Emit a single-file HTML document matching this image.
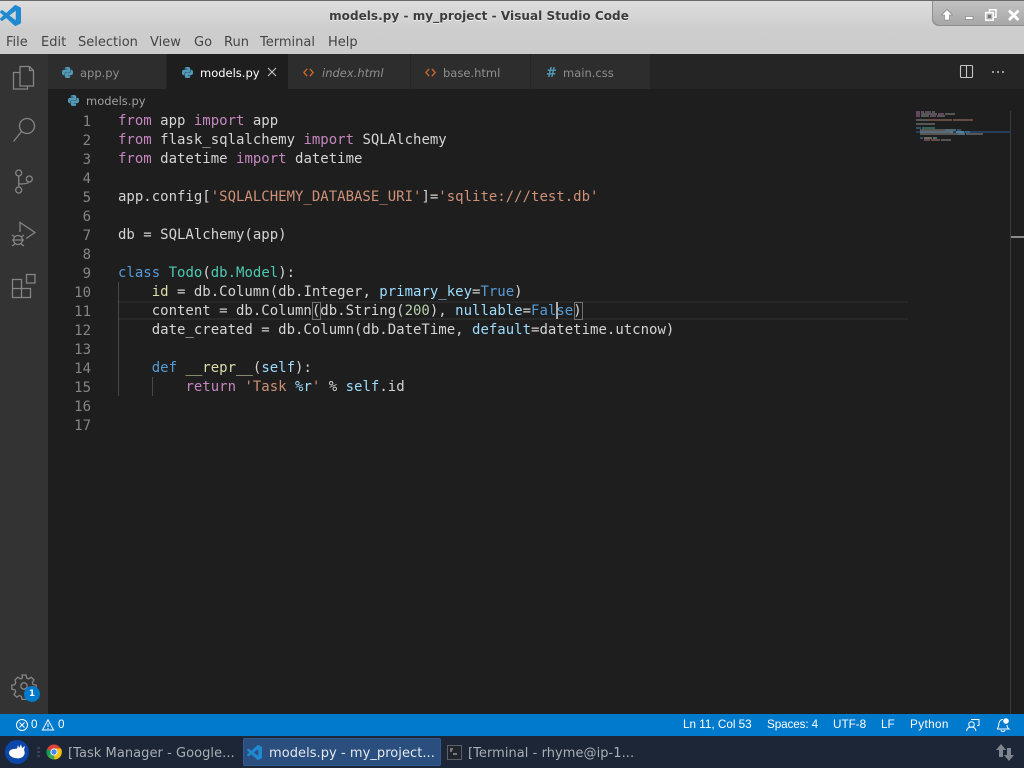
<!DOCTYPE html>
<html><head><meta charset="utf-8"><style>
html,body{margin:0;padding:0;width:1024px;height:768px;overflow:hidden;background:#1e1e1e}
.a{position:absolute;white-space:pre}
#code div{position:absolute;left:118px;height:19px;line-height:19px;white-space:pre;font:14px/19px "DejaVu Sans Mono","Liberation Mono",monospace;color:#d4d4d4}
.n{position:absolute;width:43px;left:48px;text-align:right;font:14px/19px "DejaVu Sans Mono","Liberation Mono",monospace;color:#858585}
.k{color:#c586c0}.b{color:#569cd6}.s{color:#ce9178}.t{color:#4ec9b0}.v{color:#9cdcfe}.f{color:#dcdcaa}.d{color:#b5cea8}
.m{position:absolute;top:35px;font:13px/16px "DejaVu Sans",sans-serif;color:#444}
.tab{position:absolute;top:54px;height:35px;background:#2d2d2d;border-right:1px solid #252526;box-sizing:border-box}
.tl{position:absolute;top:65px;font:11.5px/17px "DejaVu Sans",sans-serif;color:#8f8f8f;white-space:pre}
.st{position:absolute;top:717px;font:11.7px/16px "Liberation Sans",sans-serif;color:#fff;white-space:pre}
.tb{position:absolute;top:745px;font:13px/17px "DejaVu Sans",sans-serif;letter-spacing:.05px;color:#a9aeb5;white-space:pre}
svg{position:absolute;overflow:visible}
</style></head><body>
<svg width="0" height="0" style="position:absolute"><defs>
<symbol id="py" viewBox="0 0 24 24"><path fill="#519aba" d="M14.25.18l.9.2.73.26.59.3.45.32.34.34.25.34.16.33.1.3.04.26.02.2-.01.13V8.5l-.05.63-.13.55-.21.46-.26.38-.3.31-.33.25-.35.19-.35.14-.33.1-.3.07-.26.04-.21.02H8.77l-.69.05-.59.14-.5.22-.41.27-.33.32-.27.35-.2.36-.15.37-.1.35-.07.32-.04.27-.02.21v3.06H3.17l-.21-.03-.28-.07-.32-.12-.35-.18-.36-.26-.36-.36-.35-.46-.32-.59-.28-.73-.21-.88-.14-1.05-.05-1.23.06-1.22.16-1.04.24-.87.32-.71.36-.57.4-.44.42-.33.42-.24.4-.16.36-.1.32-.05.24-.01h.16l.06.01h8.16v-.83H6.18l-.01-2.75-.02-.37.05-.34.11-.31.17-.28.25-.26.31-.23.38-.2.44-.18.51-.15.58-.12.64-.1.71-.06.77-.04.84-.02 1.27.05zm-6.3 1.98l-.23.33-.08.41.08.41.23.34.33.22.41.09.41-.09.33-.22.23-.34.08-.41-.08-.41-.23-.33-.33-.22-.41-.09-.41.09zm13.09 3.95l.28.06.32.12.35.18.36.27.36.35.35.47.32.59.28.73.21.88.14 1.04.05 1.23-.06 1.23-.16 1.04-.24.86-.32.71-.36.57-.4.45-.42.33-.42.24-.4.16-.36.09-.32.05-.24.02-.16-.01h-8.22v.82h5.84l.01 2.76.02.36-.05.34-.11.31-.17.29-.25.25-.31.24-.38.2-.44.17-.51.15-.58.13-.64.09-.71.07-.77.04-.84.01-1.27-.04-1.07-.14-.9-.2-.73-.25-.59-.3-.45-.33-.34-.34-.25-.34-.16-.33-.1-.3-.04-.25-.02-.2.01-.13v-5.34l.05-.64.13-.54.21-.46.26-.38.3-.32.33-.24.35-.2.35-.14.33-.1.3-.06.26-.04.21-.02.13-.01h5.84l.69-.05.59-.14.5-.21.41-.28.33-.32.27-.35.2-.36.15-.36.1-.35.07-.32.04-.28.02-.21V6.07h2.09l.14.01z"/></symbol>
<symbol id="vs" viewBox="0 0 24 24"><path d="M23.15 2.587L18.21.21a1.494 1.494 0 0 0-1.705.29l-9.46 8.63-4.12-3.128a.999.999 0 0 0-1.276.057L.327 7.261A1 1 0 0 0 .326 8.74L3.899 12 .326 15.26a1 1 0 0 0 .001 1.479L1.65 17.94a.999.999 0 0 0 1.276.057l4.12-3.128 9.46 8.63a1.492 1.492 0 0 0 1.704.29l4.942-2.377A1.5 1.5 0 0 0 24 20.06V3.939a1.5 1.5 0 0 0-.85-1.352zm-5.146 14.861L10.826 12l7.178-5.448v10.896z"/></symbol>
<symbol id="ht" viewBox="0 0 12 12"><path d="M4.5 2 1 6l3.5 4M7.5 2 11 6l-3.5 4" fill="none" stroke="#c8682a" stroke-width="1.5"/></symbol>
</defs></svg>

<!-- title + menu -->
<div class="a" style="left:0;top:0;width:1024px;height:54px;background:linear-gradient(#dedede 0,#d6d6d6 14px,#cdcdcd 30px,#cccccc 100%)"></div>
<div class="a" style="left:0;top:0;width:1024px;height:1px;background:#6a6a6a"></div>
<svg style="left:0;top:5px" width="21" height="21"><use href="#vs" width="21" height="21" fill="#1f8ad2"/></svg>
<div class="a" style="left:319px;top:8px;width:320px;text-align:center;font:bold 12px/16px 'DejaVu Sans',sans-serif;color:#3c3c3c;text-shadow:0 1px 0 #eee;letter-spacing:.05px">models.py - my_project - Visual Studio Code</div>
<div class="m" style="left:6px">File</div><div class="m" style="left:41px">Edit</div><div class="m" style="left:78px">Selection</div><div class="m" style="left:150px">View</div><div class="m" style="left:194px">Go</div><div class="m" style="left:224px">Run</div><div class="m" style="left:260px">Terminal</div><div class="m" style="left:328px">Help</div>

<!-- window controls -->
<div class="a" style="left:932px;top:1px;width:92px;height:25px;background:linear-gradient(#c2c2c2,#a6a6a6);border-bottom-left-radius:7px;box-shadow:inset 1px -1px 0 #8e8e8e"></div>
<svg style="left:932px;top:1px" width="92" height="25">
<path d="M15 8.500 20.500 14H17.500v5h-5v-5H9.500z" fill="#fff" stroke="#777" stroke-width=".6"/>
<rect x="33.500" y="15.500" width="7.500" height="3" fill="#fff" stroke="#777" stroke-width=".6"/>
<path d="M57.500 11V8.700h6.500v7.500h-2.500" fill="none" stroke="#fff" stroke-width="1.500"/>
<rect x="53.700" y="11.700" width="7.500" height="7.500" fill="none" stroke="#fff" stroke-width="1.500"/>
<rect x="56" y="14" width="3" height="3" fill="#777"/>
<path d="M77 9.500l9.500 9.500M86.500 9.500 77 19" stroke="#fff" stroke-width="2.800" fill="none"/>
</svg>

<!-- activity bar -->
<div class="a" style="left:0;top:54px;width:48px;height:660px;background:#333"></div>
<svg style="left:0;top:54px" width="48" height="660" fill="none" stroke="#858585" stroke-width="1.300">
<path d="M20 12.500h9.500l4 4v15.500H20z M29.500 12.500v4h4"/>
<path d="M20 18.500h-6.500v16.500h14v-3"/>
<circle cx="27" cy="72" r="7.500"/><path d="M21.500 77.500 13.500 87.500"/>
<circle cx="18.700" cy="119" r="3"/><circle cx="29.300" cy="125" r="3"/><circle cx="18.700" cy="136" r="3"/>
<path d="M18.700 122v11M19 130c6 0 9-.5 10.300-2"/>
<path d="M20 178V168.500l15 10-9 6"/>
<circle cx="18" cy="186" r="4.500"/><path d="M12 181l3 2M24 181l-3 2M12 186h2M22 186h2M12 192l3-2M24 192l-3-2M13.500 186h9"/>
<path d="M12.500 225.500h9v9h-9zM12.500 234.500h9v9h-9zM21.500 234.500h9v9h-9zM26.500 220.500h8.500v8.500h-8.500z"/>
</svg>
<svg style="left:12px;top:674px" width="24" height="24" viewBox="0 0 24 24" fill="none" stroke="#858585" stroke-width="1.300">
<path d="M10 1h4l.6 3 2 .9 2.600-1.700 2.800 2.800-1.700 2.600.9 2 3 .6v4l-3 .6-.9 2 1.700 2.600-2.800 2.800-2.600-1.700-2 .9-.6 3h-4l-.6-3-2-.9-2.600 1.700-2.800-2.800 1.700-2.600-.9-2-3-.6v-4l3-.6.9-2L3 6l2.800-2.800 2.600 1.700 2-.9z"/>
<circle cx="12" cy="12" r="3.200"/></svg>
<div class="a" style="left:24px;top:686px;width:16px;height:16px;border-radius:50%;background:#007acc;color:#fff;font:bold 9px/16px 'DejaVu Sans',sans-serif;text-align:center">1</div>

<!-- tabs -->
<div class="a" style="left:48px;top:54px;width:976px;height:35px;background:#252526"></div>
<div class="tab" style="left:48px;width:119px"></div>
<div class="tab" style="left:167px;width:121px;background:#1e1e1e;border:0"></div>
<div class="tab" style="left:288px;width:123px"></div>
<div class="tab" style="left:411px;width:120px"></div>
<div class="tab" style="left:531px;width:119px;border:0"></div>
<svg style="left:62px;top:67px" width="11" height="11"><use href="#py" width="11" height="11"/></svg>
<div class="tl" style="left:80px">app.py</div>
<svg style="left:182px;top:67px" width="11" height="11"><use href="#py" width="11" height="11"/></svg>
<div class="tl" style="left:200px;color:#fff">models.py</div>
<svg style="left:267px;top:67px" width="10" height="10"><path d="M1 1l8 8M9 1l-8 8" stroke="#c8c8c8" stroke-width="1.100" fill="none"/></svg>
<svg style="left:303px;top:67px" width="11" height="11"><use href="#ht" width="11" height="11"/></svg>
<div class="tl" style="left:322px;font-style:italic">index.html</div>
<svg style="left:425px;top:67px" width="11" height="11"><use href="#ht" width="11" height="11"/></svg>
<div class="tl" style="left:443px">base.html</div>
<div class="a" style="left:546px;top:65px;font:bold 13px/17px 'DejaVu Sans',sans-serif;color:#519aba">#</div>
<div class="tl" style="left:563px">main.css</div>
<svg style="left:960px;top:65px" width="14" height="14" fill="none" stroke="#c5c5c5" stroke-width="1.100"><rect x=".5" y=".5" width="12" height="12" rx="1"/><path d="M6.500 .5v12"/></svg>
<svg style="left:992px;top:71px" width="13" height="3" fill="#c5c5c5"><circle cx="1" cy="1" r="1"/><circle cx="6" cy="1" r="1"/><circle cx="11" cy="1" r="1"/></svg>

<!-- breadcrumb -->
<svg style="left:68px;top:95px" width="11" height="11"><use href="#py" width="11" height="11"/></svg>
<div class="tl" style="left:86px;top:93px;color:#a0a0a0">models.py</div>

<!-- current line + guides -->
<div class="a" style="left:118px;top:301px;width:790px;height:15px;border-top:2px solid #282828;border-bottom:2px solid #282828"></div>
<div class="a" style="left:118px;top:282px;width:1px;height:114px;background:#484848"></div>
<div class="a" style="left:152px;top:377px;width:1px;height:19px;background:#484848"></div>
<div class="a" style="left:312px;top:302px;width:7px;height:16px;border:1px solid #707070"></div>
<div class="a" style="left:574px;top:302px;width:7px;height:16px;border:1px solid #707070"></div>
<div class="a" style="left:556px;top:302px;width:2px;height:17px;background:#aeafad;z-index:5"></div>

<!-- line numbers -->
<div class="n" style="top:113px">1</div><div class="n" style="top:132px">2</div><div class="n" style="top:151px">3</div><div class="n" style="top:170px">4</div><div class="n" style="top:189px">5</div><div class="n" style="top:208px">6</div><div class="n" style="top:227px">7</div><div class="n" style="top:246px">8</div><div class="n" style="top:265px">9</div><div class="n" style="top:284px">10</div><div class="n" style="top:303px">11</div><div class="n" style="top:322px">12</div><div class="n" style="top:341px">13</div><div class="n" style="top:360px">14</div><div class="n" style="top:379px">15</div><div class="n" style="top:398px">16</div><div class="n" style="top:417px">17</div>

<!-- code -->
<div id="code">
<div style="top:112px"><span class="k">from</span> app <span class="k">import</span> app</div>
<div style="top:131px"><span class="k">from</span> flask_sqlalchemy <span class="k">import</span> SQLAlchemy</div>
<div style="top:150px"><span class="k">from</span> datetime <span class="k">import</span> datetime</div>
<div style="top:188px">app.config[<span class="s">'SQLALCHEMY_DATABASE_URI'</span>]=<span class="s">'sqlite:///test.db'</span></div>
<div style="top:226px">db = SQLAlchemy(app)</div>
<div style="top:264px"><span class="b">class</span> <span class="t">Todo</span>(<span class="t">db.Model</span>):</div>
<div style="top:283px">    <span class="f">id</span> = db.Column(db.Integer, <span class="v">primary_key</span>=<span class="b">True</span>)</div>
<div style="top:302px">    content = db.Column(db.String(<span class="d">200</span>), <span class="v">nullable</span>=<span class="b">False</span>)</div>
<div style="top:321px">    date_created = db.Column(db.DateTime, <span class="v">default</span>=datetime.utcnow)</div>
<div style="top:359px">    <span class="b">def</span> <span class="f">__repr__</span>(<span class="v">self</span>):</div>
<div style="top:378px">        <span class="k">return</span> <span class="s">'Task </span><span class="v">%r</span><span class="s">'</span> % <span class="v">self</span>.id</div>
</div>

<!-- minimap -->
<svg style="left:916px;top:111px" width="108" height="120">
<rect x="0" y="20" width="94" height="2" fill="#264f78" opacity=".7"/>
<g opacity=".4">
<rect x="0" y="0" width="4" height="2" fill="#c586c0"/><rect x="5" y="0" width="3" height="2" fill="#aaa"/><rect x="9" y="0" width="6" height="2" fill="#c586c0"/><rect x="16" y="0" width="3" height="2" fill="#aaa"/>
<rect x="0" y="2" width="4" height="2" fill="#c586c0"/><rect x="5" y="2" width="16" height="2" fill="#aaa"/><rect x="22" y="2" width="6" height="2" fill="#c586c0"/><rect x="29" y="2" width="10" height="2" fill="#aaa"/>
<rect x="0" y="4" width="4" height="2" fill="#c586c0"/><rect x="5" y="4" width="8" height="2" fill="#aaa"/><rect x="14" y="4" width="6" height="2" fill="#c586c0"/><rect x="21" y="4" width="8" height="2" fill="#aaa"/>
<rect x="0" y="8" width="11" height="2" fill="#aaa"/><rect x="11" y="8" width="25" height="2" fill="#ce9178"/><rect x="37" y="8" width="20" height="2" fill="#ce9178"/>
<rect x="0" y="12" width="19" height="2" fill="#aaa"/>
<rect x="0" y="16" width="5" height="2" fill="#569cd6"/><rect x="6" y="16" width="13" height="2" fill="#4ec9b0"/>
<rect x="4" y="18" width="25" height="2" fill="#aaa"/><rect x="29" y="18" width="11" height="2" fill="#9cdcfe"/><rect x="41" y="18" width="4" height="2" fill="#569cd6"/>
<rect x="4" y="20" width="30" height="2" fill="#aaa"/><rect x="34" y="20" width="3" height="2" fill="#b5cea8"/><rect x="40" y="20" width="8" height="2" fill="#9cdcfe"/><rect x="49" y="20" width="5" height="2" fill="#569cd6"/>
<rect x="4" y="22" width="38" height="2" fill="#aaa"/><rect x="42" y="22" width="7" height="2" fill="#9cdcfe"/><rect x="50" y="22" width="17" height="2" fill="#aaa"/>
<rect x="4" y="26" width="3" height="2" fill="#569cd6"/><rect x="8" y="26" width="8" height="2" fill="#dcdcaa"/><rect x="17" y="26" width="4" height="2" fill="#9cdcfe"/>
<rect x="8" y="28" width="6" height="2" fill="#c586c0"/><rect x="15" y="28" width="9" height="2" fill="#ce9178"/><rect x="25" y="28" width="10" height="2" fill="#aaa"/>
</g></svg>
<div class="a" style="left:1010px;top:111px;width:1px;height:603px;background:#3c3c3c"></div>
<div class="a" style="left:1011px;top:236px;width:13px;height:2px;background:#8a8a8a"></div>

<!-- status bar -->
<div class="a" style="left:0;top:714px;width:1024px;height:22px;background:#007acc"></div>
<svg style="left:16px;top:719px" width="12" height="12" fill="none" stroke="#fff"><circle cx="6" cy="6" r="5.500"/><path d="M3.500 3.500l5 5M8.500 3.500l-5 5"/></svg>
<div class="st" style="left:31px">0</div>
<svg style="left:42px;top:719px" width="12" height="12" fill="none" stroke="#fff"><path d="M6 .8 11.500 11H.5z"/><path d="M6 4.500v3.500M6 9v1"/></svg>
<div class="st" style="left:58px">0</div>
<div class="st" style="left:683px">Ln 11, Col 53</div>
<div class="st" style="left:767px;letter-spacing:-.1px">Spaces: 4</div>
<div class="st" style="left:833px">UTF-8</div>
<div class="st" style="left:881px">LF</div>
<div class="st" style="left:910px;letter-spacing:.4px">Python</div>
<svg style="left:966px;top:718px" width="14" height="14" fill="none" stroke="#fff"><circle cx="5.500" cy="6.500" r="2.800"/><path d="M.5 13c.5-3 2.500-4 5-4s4 1 4.500 4M5 1.500h8v6h-2"/></svg>
<svg style="left:996px;top:717px" width="14" height="16" fill="none" stroke="#fff"><path d="M1 12c2-1.500 1.500-4 2-6 .5-2 2-3.500 4-3.500M11 8c0 2 .5 3 2 4H1M5 13c.5 2 3.500 2 4 0"/><circle cx="10" cy="4" r="2.800" fill="#fff" stroke="none"/></svg>

<!-- taskbar -->
<div class="a" style="left:0;top:736px;width:1024px;height:32px;background:#1c2636"></div>
<div class="a" style="left:5px;top:740px;width:24px;height:24px;border-radius:50%;background:#0b47a8"></div>
<svg style="left:8px;top:743px" width="19" height="18" fill="#fff"><path d="M1 10c0-3 3-4 5-4l3-.5L10 2l1 3 2-3.500L14 5l3-2-1 4c1 2 1 4-.5 6C14 15 10 16 7 15c-3-.5-6-2.500-6-5z"/></svg>
<svg style="left:37px;top:747px" width="3" height="11" fill="#3a4352"><rect y="0" width="3" height="2"/><rect y="4" width="3" height="2"/><rect y="8" width="3" height="2"/></svg>
<svg style="left:46px;top:744px" width="16" height="16" viewBox="0 0 16 16"><circle cx="8" cy="8" r="7.500" fill="#db4437"/><path d="M8 8 1.500 11.800A7.500 7.500 0 0 0 9 15.400z" fill="#3aa757"/><path d="M8 4.500h7A7.500 7.500 0 0 1 8.500 15.500z" fill="#f4c20d"/><path d="M8 8 1.500 11.800A7.500 7.500 0 0 1 1 5.200z" fill="#0f9d58"/><circle cx="8" cy="8" r="3.600" fill="#fff"/><circle cx="8" cy="8" r="2.700" fill="#4285f4"/></svg>
<div class="tb" style="left:68px">[Task Manager - Google...</div>
<div class="a" style="left:243px;top:738px;width:198px;height:28px;box-sizing:border-box;background:#2a4f7e;border:1px solid #2f5a93;border-radius:2px"></div>
<svg style="left:247px;top:745px" width="15" height="15"><use href="#vs" width="15" height="15" fill="#1f8ad2"/></svg>
<div class="tb" style="left:269px;color:#e4e8ee">models.py - my_project...</div>
<svg style="left:447px;top:745px" width="15" height="15" fill="none"><rect x=".5" y=".5" width="14" height="14" fill="#20242c" stroke="#59606a"/><path d="M3 4h3M3 6h2M6 9h4" stroke="#ccc"/></svg>
<div class="tb" style="left:468px">[Terminal - rhyme@ip-1...</div>
<svg style="left:996px;top:744px" width="18" height="17" fill="#7f858d"><path d="M5 0 0 6h3v7h4V6h3zM13 17l5-6h-3V4h-4v7H8z"/></svg>
</body></html>
